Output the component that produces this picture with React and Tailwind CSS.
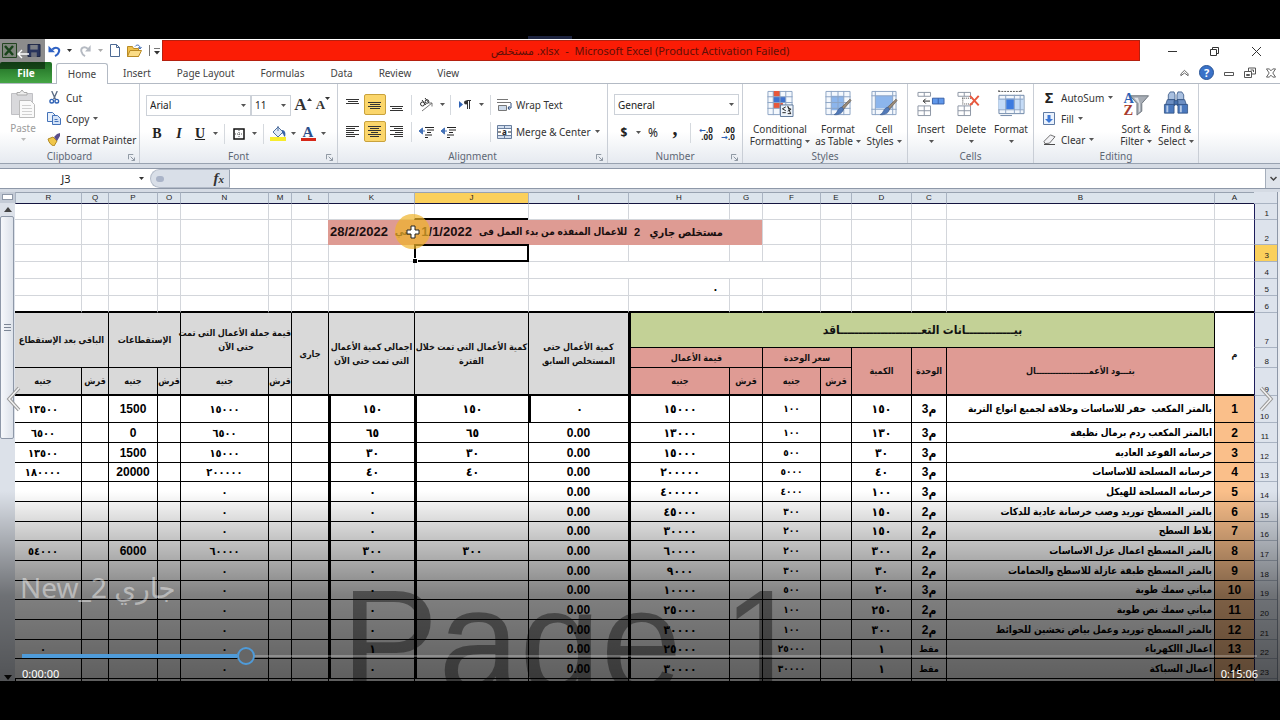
import { useState } from "react"

const ITEMS = [
  { name: "بالمتر المكعب  حفر للاساسات وخلافة لجميع انواع التربة", unit: "م3", qty: "١٥٠", price: "١٠٠", value: "١٥٠٠٠", prev: "٠", current: "١٥٠", total: "١٥٠", sum: "١٥٠٠٠", cut: "1500", rest: "١٣٥٠٠" },
  { name: "ابالمتر المكعب ردم برمال نظيفة", unit: "م3", qty: "١٣٠", price: "١٠٠", value: "١٣٠٠٠", current: "٦٥", total: "٦٥", sum: "٦٥٠٠", cut: "0", rest: "٦٥٠٠" },
  { name: "خرسانه القوعد العاديه", unit: "م3", qty: "٣٠", price: "٥٠٠", value: "١٥٠٠٠", current: "٣٠", total: "٣٠", sum: "١٥٠٠٠", cut: "1500", rest: "١٣٥٠٠" },
  { name: "خرسانه المسلحة للاساسات", unit: "م3", qty: "٤٠", price: "٥٠٠٠", value: "٢٠٠٠٠٠", current: "٤٠", total: "٤٠", sum: "٢٠٠٠٠٠", cut: "20000", rest: "١٨٠٠٠٠" },
  { name: "خرسانه المسلحة للهيكل", unit: "م3", qty: "١٠٠", price: "٤٠٠٠", value: "٤٠٠٠٠٠" },
  { name: "بالمتر المسطح توريد وصب خرسانة عادية للدكات", unit: "م2", qty: "١٥٠", price: "٣٠٠", value: "٤٥٠٠٠" },
  { name: "بلاط السطح", unit: "م2", qty: "١٥٠", price: "٢٠٠", value: "٣٠٠٠٠" },
  { name: "بالمتر المسطح اعمال عزل الاساسات", unit: "م2", qty: "٣٠٠", price: "٢٠٠", value: "٦٠٠٠٠", current: "٣٠٠", total: "٣٠٠", sum: "٦٠٠٠٠", cut: "6000", rest: "٥٤٠٠٠" },
  { name: "بالمتر المسطح طبقة عازلة للاسطح والحمامات", unit: "م2", qty: "٣٠", price: "٣٠٠", value: "٩٠٠٠" },
  { name: "مباني سمك طوبة", unit: "م3", qty: "٢٠", price: "٥٠٠", value: "١٠٠٠٠" },
  { name: "مباني سمك نص طوبة", unit: "م2", qty: "٢٥٠", price: "١٠٠", value: "٢٥٠٠٠" },
  { name: "بالمتر المسطح توريد وعمل بياض تخشين للحوائط", unit: "م2", qty: "٣٠٠", price: "١٠٠", value: "٣٠٠٠٠" },
  { name: "اعمال االكهرباء", unit: "مقط", qty: "١", price: "٢٥٠٠٠", value: "٢٥٠٠٠", total: "١", rest: "٠" },
  { name: "اعمال السباكة", unit: "مقط", qty: "١", price: "٣٠٠٠٠", value: "٣٠٠٠٠" },
]

const COLUMNS = [
  ["A", "w-[40px]"],
  ["B", ""],
  ["C", "w-[35px]"],
  ["D", "w-[60px]"],
  ["E", "w-[31px]"],
  ["F", "w-[58px]"],
  ["G", "w-[33px]"],
  ["H", "w-[101px]"],
  ["I", "w-[100px]"],
  ["J", "w-[114px]"],
  ["K", "w-[86px]"],
  ["L", "w-[37px]"],
  ["M", "w-[23px]"],
  ["N", "w-[88px]"],
  ["O", "w-[23px]"],
  ["P", "w-[49px]"],
  ["Q", "w-[27px]"],
  ["R", "w-[66px]"],
]

const TABS = ["Insert", "Page Layout", "Formulas", "Data", "Review", "View"]

function Caret({ className = "text-[#555]" }) {
  return (
    <svg viewBox="0 0 5 3" className={`w-[5px] h-[3px] shrink-0 ${className}`} fill="currentColor">
      <path d="M0 0h5L2.5 3z" />
    </svg>
  )
}

function CaretButton({ label }) {
  return (
    <button aria-label={label} className="w-[10px] h-5 flex items-center justify-center">
      <Caret />
    </button>
  )
}

function Sep({ className = "mx-[4px]" }) {
  return <span className={`w-px h-5 bg-[#d5d9de] shrink-0 ${className}`}></span>
}

function IconButton({ label, active, wide, children }) {
  return (
    <button
      aria-label={label}
      className={`h-[21px] flex items-center justify-center shrink-0 ${wide ? "w-[22px]" : "w-5"} ${active ? "bg-[#fbd66b] border border-[#c9a23c] rounded-[2px]" : ""}`}
    >
      {children}
    </button>
  )
}

function Group({ title, width, launcher, children }) {
  return (
    <section className={`h-full shrink-0 flex flex-col border-r border-[#c9ced6] ${width}`}>
      <div className="h-[64px] shrink-0">{children}</div>
      <div className="flex-1 relative flex items-center justify-center text-[#5d6775]">
        {title}
        {launcher && (
          <button aria-label={`${title} settings`} className="absolute right-[4px] top-[6px]">
            <svg viewBox="0 0 8 8" className="w-[7px] h-[7px]" fill="none" stroke="#7d8794">
              <path d="M.5 6V.5H6M3 3l4 4M7.500 4v3.500H4" />
            </svg>
          </button>
        )}
      </div>
    </section>
  )
}

function BigButton({ icon, lines, caretBelow, width }) {
  return (
    <button className={`flex flex-col items-center pt-[6px] text-[#333] ${width}`}>
      {icon}
      <span className="mt-[6px] leading-[12px]">{lines[0]}</span>
      {caretBelow ? (
        <span className="h-[12px] flex items-center"><Caret /></span>
      ) : (
        <span className="leading-[12px] flex items-center gap-[3px] whitespace-nowrap">{lines[1]} <Caret /></span>
      )}
    </button>
  )
}

function SmallButton({ icon, label, caret }) {
  return (
    <button className="h-[21px] flex items-center gap-[4px] whitespace-nowrap text-[#333]">
      <span className="w-4 flex justify-center">{icon}</span>
      {label}
      {caret && <Caret />}
    </button>
  )
}

function RibbonSelect({ label, value, width }) {
  return (
    <div className={`relative h-[21px] ${width}`}>
      <select aria-label={label} defaultValue={value} className="w-full h-full appearance-none bg-white border border-[#ccd1d8] pl-[3px] text-[#222]">
        <option>{value}</option>
      </select>
      <span className="absolute right-[5px] top-[9px]"><Caret /></span>
    </div>
  )
}

/* horizontal text lines, used by all six alignment buttons */
function Lines({ rows, y = 2 }) {
  return (
    <svg viewBox="0 0 14 14" className="w-[14px] h-[14px]" stroke="#333">
      {rows.map(([x, w], i) => (
        <path key={i} d={`M${x} ${y + i * 2 - 0.5}h${w}`} />
      ))}
    </svg>
  )
}

function SheetIcon({ kind }) {
  return (
    <svg viewBox="0 0 28 28" className="w-[28px] h-[27px]">
      <path d="M1.500 1.500h25v24h-25z" fill="#f4f8fd" stroke="#8ba3c4" />
      {kind !== "cell" && <path d="M7 6h13v15H7z" fill={kind === "table" ? "#8cb5ec" : "#f4f8fd"} />}
      {kind === "cell" && <path d="M5 6h18v13H5z" fill="#8cb5ec" />}
      {kind === "cond" && (
        <>
          <path d="M7 1h7v6H7zM7 13h10v6H7z" fill="#e8583a" />
          <path d="M7 7h13v6H7z" fill="#3f72cf" />
        </>
      )}
      <path d={kind === "cell" ? "M1 6h26M1 20h26M5 1v25M23 1v25" : "M1 7h26M1 13h26M1 19h26M7 1v25M14 1v25M20 1v25"} stroke="#8ba3c4" fill="none" />
      {kind === "cond" ? (
        <>
          <path d="M14.500 15.500h13v12h-13z" fill="#eef4fb" stroke="#5c7698" />
          <path d="M20 17.500l-3.500 2 3.500 2M16.500 23.500H20M22 18l3.500 2-3.500 2M22 24.500h3.500M22 16.500l3 8" stroke="#222" fill="none" />
        </>
      ) : (
        <>
          <path d="M26.500 9.500l1 1.500-9 10.500-2.500-2z" fill="#9a8a78" stroke="#62584e" strokeWidth=".7" />
          <path d="M19 18.500c1.500 2-.5 5.500-4 6.500-2 .8-4 .8-5 .5 2.500-1 3-3.500 4.500-5.500 1.200-1.600 3-2.300 4.500-1.500z" fill="#5179b8" stroke="#35568b" strokeWidth=".6" />
        </>
      )}
    </svg>
  )
}

function CellsIcon({ kind }) {
  if (kind === "format") {
    return (
      <svg viewBox="0 0 28 28" className="w-[28px] h-[27px]" fill="none">
        <path d="M1 1.500h24M1.500 0v3M24.500 0v3" stroke="#555" strokeDasharray="2 1" />
        <path d="M1.500 5.500h26v19h-26z" fill="#f3f7fc" stroke="#6d86a8" />
        <path d="M1 9h26v11H1z" fill="#c4dbf7" />
        <path d="M9 9h8v11H9z" fill="#3d7be0" />
        <path d="M1 9.500h26M1 20.500h26M8.500 5v19M17.500 5v19M23.500 5v19" stroke="#8ba3c4" />
        <path d="M3 26.500h12" stroke="#6d86a8" />
      </svg>
    )
  }
  return (
    <svg viewBox="0 0 28 28" className="w-[28px] h-[27px]" fill="none">
      <path d="M.5 2.500h13v4H.5zM7 2.500v4M.5 16.500h13v10H.5zM7 16.500v10M.5 21.500h13" fill="#fff" stroke="#8b95a3" />
      {kind === "insert" ? (
        <>
          <path d="M15.500 8.500h12v6h-12z" fill="#5f97ea" stroke="#3a62a8" />
          <path d="M21.500 8.500v6" stroke="#3a62a8" />
          <path d="M13 11.500H6M8.500 9L6 11.500 8.500 14" stroke="#222" />
        </>
      ) : (
        <>
          <path d="M5 8.500h12M5 14.500h12M5.500 8v6" stroke="#444" strokeDasharray="1 1" />
          <path d="M13 6l9 10M22 6l-9 10" stroke="#e8593f" strokeWidth="2" />
        </>
      )}
    </svg>
  )
}

function Binoculars() {
  return (
    <svg viewBox="0 0 28 28" className="w-[28px] h-[27px]" stroke="#2f4f80" strokeWidth=".8">
      <path d="M8 2h4l1 3v5H6V5zM16 2h4l2 3v5h-7V5z" fill="#a9c0e0" />
      <path d="M5 10h8v6H3zM15 10h8l2 6H15z" fill="#6d90c4" />
      <path d="M12 11h4v4h-4z" fill="#4670ad" />
      <path d="M2 15h10v9H2zM16 15h10v9H16z" fill="#4a78bd" />
      <path d="M4 16h2v7H4zM18 16h2v7h-2z" fill="#b6cbe8" stroke="none" />
    </svg>
  )
}

function SortIcon() {
  return (
    <svg viewBox="0 0 28 28" className="w-[28px] h-[27px]">
      <path d="M8 6h19l-7 8v8l-5 4V14z" fill="#a7adb5" stroke="#6b727c" />
      <path d="M12 8h4l2 6v8l-1 1V14z" fill="#dfe3e7" />
      <text x="1" y="13" fontFamily="Liberation Serif" fontWeight="bold" fontSize="15" fill="#2f62b5">A</text>
      <text x="1" y="26" fontFamily="Liberation Serif" fontWeight="bold" fontSize="15" fill="#a83a2c">Z</text>
    </svg>
  )
}

function TitleBar() {
  return (
    <header className="h-[23px] shrink-0 flex items-center bg-white">
      <div className="w-[162px] h-full flex items-center gap-[7px] pl-[2px]">
        <svg viewBox="0 0 15 15" className="w-[15px] h-[15px] shrink-0">
          <path d="M.5.500h14v14H.5z" fill="#e6f2e2" stroke="#3f7d3b" />
          <path d="M3 3l8 9M11 3l-8 9" stroke="#2d7a31" strokeWidth="2.500" />
        </svg>
        <svg viewBox="0 0 14 14" className="w-[14px] h-[13px] ml-[3px] shrink-0">
          <path d="M.5.500h13v13H.5z" fill="#4a5fa8" stroke="#2a3b77" />
          <path d="M3 1h8v5H3z" fill="#e4e9f5" />
          <path d="M4 9h6v5H4z" fill="#c6cde0" />
        </svg>
        <button aria-label="Undo" className="flex items-center gap-[5px]">
          <svg viewBox="0 0 14 14" className="w-[14px] h-[13px]" fill="none">
            <path d="M4 6c4-4 9-1 7 3-.5 1.500-2 3-4 4" stroke="#2f62c4" strokeWidth="2.200" />
            <path d="M0 2v7h7z" fill="#2f62c4" />
          </svg>
          <Caret className="text-[#333]" />
        </button>
        <button aria-label="Redo" className="flex items-center gap-[5px]">
          <svg viewBox="0 0 14 14" className="w-[14px] h-[13px]" fill="none">
            <path d="M9 5C5 2 1 4 2 8c.5 2 2 4 4 5" stroke="#b5bac2" strokeWidth="2" />
            <path d="M12 1v7H6z" fill="#b5bac2" />
          </svg>
          <Caret className="text-[#aaa]" />
        </button>
        <svg viewBox="0 0 10 13" className="w-[10px] h-[13px] shrink-0">
          <path d="M.5.500h6l3 3v9h-9z" fill="#fff" stroke="#4d6a94" />
          <path d="M6.500.500v3h3" fill="none" stroke="#4d6a94" />
        </svg>
        <svg viewBox="0 0 15 13" className="w-[15px] h-[13px] shrink-0">
          <path d="M.5 2.500h5l1 2h5v8H.5z" fill="#f0c24c" stroke="#b98a24" />
          <path d="M3 6.500h11.500l-3 6H.5z" fill="#fbdc86" stroke="#b98a24" />
          <path d="M8 2.500c2-2.500 5-1.500 5 1.500M11.500 3L13 5l1.500-2" fill="none" stroke="#3a67b0" />
        </svg>
        <button aria-label="Customize toolbar">
          <svg viewBox="0 0 11 11" className="w-[11px] h-[11px]">
            <path d="M.5 0v11M5 3.500h6" stroke="#777" />
            <path d="M5 6h6L8 9.500z" fill="#333" />
          </svg>
        </button>
      </div>
      <div className="flex-1 h-[21px] bg-[#fb1c05] border border-[#b5200f] flex items-center justify-center text-[11px] text-[#5f0f08]">
        <h1 className="whitespace-pre pr-[22px]">مستخلص .xlsx  -  Microsoft Excel (Product Activation Failed)</h1>
      </div>
      <div className="w-[140px] h-full flex items-center justify-end gap-[31px] pr-[18px] pt-[2px] text-[#333]">
        <button aria-label="Minimize">
          <svg viewBox="0 0 11 11" className="w-[11px] h-[11px]" stroke="currentColor"><path d="M1 5.500h9" /></svg>
        </button>
        <button aria-label="Restore">
          <svg viewBox="0 0 11 11" className="w-[11px] h-[11px]" stroke="currentColor" fill="none"><path d="M1.500 3.500h6v6h-6zM3.500 3.500v-2h6v6h-2" /></svg>
        </button>
        <button aria-label="Close">
          <svg viewBox="0 0 11 11" className="w-[11px] h-[11px]" stroke="currentColor"><path d="M1 1l9 9M10 1l-9 9" /></svg>
        </button>
      </div>
    </header>
  )
}

function TabRow() {
  return (
    <nav className="h-[22px] shrink-0 flex items-end border-b border-[#b3bac4] text-[#444]">
      <button className="w-[52px] h-[21px] font-bold text-white rounded-t-[2px] bg-linear-to-b from-[#1d6c22] to-[#45a545]">File</button>
      <button className="w-[52px] h-[21px] ml-[4px] mr-[2px] -mb-px bg-white border border-b-0 border-[#b3bac4] rounded-t-[3px]">Home</button>
      {TABS.map((t) => (
        <button key={t} className="h-[21px] px-[13px]">{t}</button>
      ))}
      <div className="ml-auto h-[21px] flex items-center gap-[10px] pr-[4px] text-[#555]">
        <svg viewBox="0 0 10 8" className="w-[9px] h-[8px]" fill="none" stroke="currentColor"><path d="M1 5l4-4 4 4v2L5 4 1 7z" /></svg>
        <button aria-label="Help" className="size-[15px] rounded-full bg-[#3a72c8] border border-[#2a5596] text-[11px] text-white font-bold leading-[12px]">?</button>
        <svg viewBox="0 0 10 8" className="w-[10px] h-[8px]" fill="none" stroke="currentColor"><path d="M.5 3.500h9v3h-9z" /></svg>
        <svg viewBox="0 0 12 11" className="w-[12px] h-[11px]" fill="none" stroke="currentColor"><path d="M.5 4.500h7v6h-7zM2.500 7.500h3v1h-3zM4.500 4v-3h7v6h-3.500M6.500 3h3v2" /></svg>
        <svg viewBox="0 0 11 10" className="w-[10px] h-[10px]" fill="none" stroke="currentColor"><path d="M.5.500h3l2 2 2-2h3L7.500 5l3 4.500h-3l-2-2-2 2h-3L3.500 5z" /></svg>
      </div>
    </nav>
  )
}

function Ribbon() {
  return (
    <div className="h-[80px] shrink-0 flex bg-linear-to-b from-white from-60% to-[#e6eaf0] border-b border-[#98a2b0]">
      <Group title="Clipboard" width="w-[140px]" launcher>
        <div className="flex">
          <button className="w-[46px] pt-[6px] flex flex-col items-center text-[#9b9b9b]">
            <svg viewBox="0 0 26 28" className="w-[26px] h-[28px]">
              <path d="M1.500 3.500h21v21h-21z" fill="#d9d9dc" stroke="#c0c0c4" />
              <path d="M7 5V2.500h3L12 0l2 2.500h3V5z" fill="#eee" stroke="#aaa" />
              <path d="M9.500 10.500h11l4 4v13h-15z" fill="#fafafa" stroke="#bbb" />
              <path d="M12 15.500h9M12 18.500h10M12 21.500h10M12 24.500h10" stroke="#d0d0d0" />
            </svg>
            <span className="mt-[4px] leading-[13px]">Paste</span>
            <Caret className="text-[#bbb] mt-[3px]" />
          </button>
          <div className="pt-[3px]">
            <SmallButton label="Cut" icon={
              <svg viewBox="0 0 12 14" className="w-[11px] h-[13px]" fill="none">
                <path d="M3 0l4 9M9 0L5 9" stroke="#5a6b85" strokeWidth="1.500" />
                <circle cx="3" cy="11" r="2" stroke="#2f62b5" strokeWidth="1.500" />
                <circle cx="8.500" cy="11" r="2" stroke="#2f62b5" strokeWidth="1.500" />
              </svg>
            } />
            <SmallButton label="Copy" caret icon={
              <svg viewBox="0 0 14 13" className="w-[14px] h-[13px]" stroke="#4472b8">
                <path d="M.5.500h5l3 3v6h-8z" fill="#e8f0fb" />
                <path d="M5.500 3.500h5l3 3v6h-8z" fill="#d4e3f8" />
                <path d="M7.500 7.500h3M7.500 9.500h4" />
              </svg>
            } />
            <SmallButton label="Format Painter" icon={
              <svg viewBox="0 0 14 13" className="w-[14px] h-[13px]">
                <path d="M1 6l5-2 4 4-3 5c-3-1-5-3-6-7z" fill="#f0c64a" stroke="#b38b25" />
                <path d="M7 4l3-3 3-1v3l-3 5z" fill="#5a4e8a" />
              </svg>
            } />
          </div>
        </div>
      </Group>

      <Group title="Font" width="w-[198px]" launcher>
        <div className="pl-[6px] pt-[10px] flex flex-col gap-[7px]">
          <div className="flex items-center">
            <RibbonSelect label="Font" value="Arial" width="w-[105px]" />
            <RibbonSelect label="Font size" value="11" width="w-[40px]" />
            <button aria-label="Grow font" className="w-[24px] flex items-start justify-center text-[#333]">
              <span className="font-['Liberation_Serif'] font-bold text-[17px] leading-5">A</span>
              <svg viewBox="0 0 5 3" className="w-[5px] h-[3px] mt-[3px]"><path d="M0 3h5L2.500 0z" fill="#333" /></svg>
            </button>
            <button aria-label="Shrink font" className="w-[16px] flex items-start justify-center text-[#333]">
              <span className="font-['Liberation_Serif'] font-bold text-[13px] leading-[22px]">A</span>
              <svg viewBox="0 0 5 3" className="w-[5px] h-[3px] mt-[3px]"><path d="M0 0h5L2.500 3z" fill="#333" /></svg>
            </button>
          </div>
          <div className="flex items-center font-['Liberation_Serif'] text-[14px] font-bold text-[#222]">
            <IconButton label="Bold" wide>B</IconButton>
            <IconButton label="Italic" wide><i>I</i></IconButton>
            <IconButton label="Underline"><u>U</u></IconButton>
            <CaretButton label="Underline style" />
            <Sep />
            <IconButton label="Borders">
              <svg viewBox="0 0 12 12" className="size-[12px]" fill="none" stroke="#111">
                <path d="M1 1h10v10H1z" strokeWidth="1.500" />
                <path d="M6 2v8M2 6h8" strokeDasharray="1 1" strokeWidth=".7" />
              </svg>
            </IconButton>
            <CaretButton label="Border style" />
            <Sep />
            <IconButton label="Fill color">
              <svg viewBox="0 0 16 15" className="w-[16px] h-[15px]">
                <path d="M0 11h16v4H0z" fill="#f7ec2c" />
                <path d="M3 6l5-5 5 5-5 5z" fill="#dfe9f7" stroke="#51719f" />
                <path d="M12 4c3 0 4 3 3 7-2-1-1-3-3-4z" fill="#3a64a8" />
                <path d="M8 0v5" stroke="#51719f" />
              </svg>
            </IconButton>
            <CaretButton label="Fill color menu" />
            <IconButton label="Font color">
              <span className="w-[15px] border-b-[3px] border-[#d62718] text-[#2c4f8c] text-[15px] leading-[12px]">A</span>
            </IconButton>
            <CaretButton label="Font color menu" />
          </div>
        </div>
      </Group>

      <Group title="Alignment" width="w-[270px]" launcher>
        <div className="pl-[4px] pt-[10px] flex flex-col gap-[6px]">
          <div className="flex items-center">
            <IconButton label="Top align" wide><Lines rows={[[0, 13], [2, 10], [0, 13]]} /></IconButton>
            <IconButton label="Middle align" wide active><Lines rows={[[0, 13], [2, 10], [0, 13], [2, 10]]} y={5} /></IconButton>
            <IconButton label="Bottom align" wide><Lines rows={[[0, 13], [2, 10], [0, 13]]} y={9} /></IconButton>
            <Sep className="mx-[3px]" />
            <IconButton label="Orientation" wide>
              <svg viewBox="0 0 15 14" className="w-[15px] h-[14px]" fill="none" stroke="#333">
                <circle cx="3.500" cy="6" r="2" />
                <path d="M3 2l4 5M6 0l4 5" />
                <circle cx="8" cy="3.500" r="1.800" />
                <path d="M3 13L13 5M13 8.500V5H9.500" stroke="#777" />
              </svg>
            </IconButton>
            <CaretButton label="Orientation menu" />
            <Sep className="mx-[3px]" />
            <IconButton label="Text direction" wide>
              <svg viewBox="0 0 12 10" className="w-[12px] h-[10px]">
                <path d="M0 1l4 3.500L0 8z" fill="#2f62b5" />
                <path d="M8.500 9V.5M10.500 9V.5M12 .5H7.500" stroke="#333" fill="none" />
                <circle cx="7" cy="2.500" r="2" fill="#333" />
              </svg>
            </IconButton>
            <CaretButton label="Text direction menu" />
            <Sep className="ml-[4px] mr-[5px]" />
            <SmallButton label="Wrap Text" icon={
              <svg viewBox="0 0 15 14" className="w-[15px] h-[14px]" fill="none">
                <path d="M0 1.500h11M0 4.500h14" stroke="#777" />
                <path d="M1.500 7.500h8v5h-8z" fill="#cfdcec" stroke="#777" />
                <path d="M14 5v5h-3M12.500 8L11 10l1.500 2" stroke="#2f4f80" />
              </svg>
            } />
          </div>
          <div className="flex items-center">
            <IconButton label="Align left" wide><Lines rows={[[0, 13], [0, 9], [0, 13], [0, 8], [0, 13], [0, 9]]} /></IconButton>
            <IconButton label="Center" wide active><Lines rows={[[0, 13], [2, 9], [0, 13], [3, 7], [0, 13], [2, 9]]} /></IconButton>
            <IconButton label="Align right" wide><Lines rows={[[0, 13], [4, 9], [0, 13], [5, 8], [0, 13], [4, 9]]} /></IconButton>
            <Sep className="mx-[3px]" />
            {["Decrease indent", "Increase indent"].map((l) => (
              <IconButton key={l} label={l} wide>
                <svg viewBox="0 0 15 14" className="w-[15px] h-[14px]" fill="none">
                  <path d="M6 2.500h9M8 5h7M8 7.500h4M6 10h7M6 12.500h3" stroke="#222" strokeWidth="1.200" />
                  <path d="M6 6H2M3.500 3L0 6l3.500 3z" fill="#4472b8" stroke="#4472b8" />
                </svg>
              </IconButton>
            ))}
            <Sep className="ml-[31px] mr-[5px]" />
            <SmallButton label="Merge & Center" caret icon={
              <svg viewBox="0 0 15 14" className="w-[15px] h-[14px]" fill="none">
                <path d="M.5.500h14v13H.5z" fill="#d3dfef" stroke="#6a7f9e" />
                <path d="M0 3.500h15M0 10.500h15M7.500 0v3.500M7.500 10.500v3" stroke="#6a7f9e" />
                <path d="M1 4h13v6H1z" fill="#fff" />
                <path d="M1 7h3M11 7h3" stroke="#222" />
                <text x="5" y="9.500" fontSize="8" fontWeight="bold" fill="#222">a</text>
              </svg>
            } />
          </div>
        </div>
      </Group>

      <Group title="Number" width="w-[135px]" launcher>
        <div className="pl-[6px] pr-[3px] pt-[10px] flex flex-col gap-[7px]">
          <RibbonSelect label="Number format" value="General" width="w-full" />
          <div className="flex items-center text-[#222]">
            <IconButton label="Currency"><b className="text-[12px]">$</b></IconButton>
            <CaretButton label="Currency menu" />
            <IconButton label="Percent" wide><span className="text-[12px]">%</span></IconButton>
            <IconButton label="Comma" wide><b className="font-['Liberation_Serif'] text-[20px] leading-[8px] pb-[10px]">,</b></IconButton>
            <Sep />
            <IconButton label="Increase decimal" wide>
              <span className="text-[8px] font-bold leading-[7px] text-right"><span className="text-[#2f62b5]">←</span>.0<br />.00</span>
            </IconButton>
            <IconButton label="Decrease decimal" wide>
              <span className="text-[8px] font-bold leading-[7px] text-right">.00<br /><span className="text-[#2f62b5]">→</span>.0</span>
            </IconButton>
          </div>
        </div>
      </Group>

      <Group title="Styles" width="w-[165px]">
        <div className="flex pl-[4px]">
          <BigButton width="w-[66px]" lines={["Conditional", "Formatting"]} icon={<SheetIcon kind="cond" />} />
          <BigButton width="w-[50px]" lines={["Format", "as Table"]} icon={<SheetIcon kind="table" />} />
          <BigButton width="w-[42px]" lines={["Cell", "Styles"]} icon={<SheetIcon kind="cell" />} />
        </div>
      </Group>

      <Group title="Cells" width="w-[126px]">
        <div className="flex pl-[3px]">
          <BigButton width="w-[40px]" lines={["Insert"]} caretBelow icon={<CellsIcon kind="insert" />} />
          <BigButton width="w-[40px]" lines={["Delete"]} caretBelow icon={<CellsIcon kind="delete" />} />
          <BigButton width="w-[40px]" lines={["Format"]} caretBelow icon={<CellsIcon kind="format" />} />
        </div>
      </Group>

      <Group title="Editing" width="w-[165px]">
        <div className="flex pl-[7px]">
          <div className="w-[75px] pt-[3px]">
            <SmallButton label="AutoSum" caret icon={<b className="text-[14px] text-[#222]">Σ</b>} />
            <SmallButton label="Fill" caret icon={
              <svg viewBox="0 0 12 13" className="w-[12px] h-[13px]">
                <path d="M.5.500h11v12H.5z" fill="#eaf2fd" stroke="#5f7ba4" />
                <path d="M4.500 3h3v4H10l-4 4-4-4h2.500z" fill="#3d78d6" />
              </svg>
            } />
            <SmallButton label="Clear" caret icon={
              <svg viewBox="0 0 14 12" className="w-[13px] h-[11px]">
                <path d="M1 8l7-7 5 2-6 7-5 .5z" fill="#f3f3f6" stroke="#666" />
                <path d="M1 11.500h12" stroke="#333" />
              </svg>
            } />
          </div>
          <BigButton width="w-[40px]" lines={["Sort &", "Filter"]} icon={<SortIcon />} />
          <BigButton width="w-[40px]" lines={["Find &", "Select"]} icon={<Binoculars />} />
        </div>
      </Group>
    </div>
  )
}

function FormulaBar() {
  return (
    <div className="h-[28px] shrink-0 bg-[#d5dbe4] pt-[4px] pb-[3px]">
      <div className="h-[21px] flex bg-white border-y border-[#8e98a8]">
        <div className="w-[150px] relative">
          <input aria-label="Name box" defaultValue="J3" className="w-full h-full pr-[18px] text-center text-[11px] text-[#222]" />
          <span className="absolute right-[6px] top-[8px]"><Caret className="text-[#333]" /></span>
        </div>
        <div className="w-[80px] rounded-l-full border border-r-[#9aa4b3] border-[#b4bcc9] bg-[#d9dfe8] flex items-center justify-between pl-[5px] pr-[5px]">
          <span className="w-[8px] h-[6px] rounded-full bg-[#aab4c8]"></span>
          <i className="font-['Liberation_Serif'] font-bold text-[15px] leading-4 text-[#333]">f<span className="text-[11px]">x</span></i>
        </div>
        <input aria-label="Formula" className="flex-1 min-w-0 h-full" />
        <button aria-label="Expand formula bar" className="w-[15px] bg-[#dfe4eb] border-l border-[#a5aebb] flex items-center justify-center">
          <svg viewBox="0 0 7 6" className="w-[7px] h-[6px]" fill="none" stroke="#444" strokeWidth="1.500"><path d="M.5 1l3 3 3-3" /></svg>
        </button>
      </div>
    </div>
  )
}

function RowHead({ n, height, active }) {
  return (
    <th className={`${height} font-normal text-[8px] leading-[10px] align-bottom text-right pr-[8px] text-[#222] border-b border-[#a9b3c2] border-l border-l-[#1d1d5c] ${active ? "bg-[#fbd05b]" : "bg-[#dde3ec]"}`}>
      {n}
    </th>
  )
}

const GRID = "border-l border-b border-[#d3d6db]"
const HEAD = "border-l border-b border-black font-bold text-[9px] leading-[14px] text-center align-middle whitespace-nowrap text-[#111]"
const CELL = "border-l border-b border-black font-bold text-center align-middle leading-4 whitespace-pre overflow-hidden"

/* empty grid cells between two column letters */
function Blank({ from, to, last }) {
  return COLUMNS.filter(([c]) => c >= from && c <= to).map(([c]) => (
    <td key={c} className={`${GRID} ${c === "R" ? "border-l-0" : ""} ${last ? "border-b-2 border-b-black" : ""}`}></td>
  ))
}

function Sheet() {
  return (
    <table dir="rtl" className="w-full table-fixed border-separate border-spacing-0 bg-white font-['Liberation_Sans','DejaVu_Sans_Condensed','DejaVu_Sans',sans-serif]">
      <colgroup>
        <col className="w-[23px]" />
        {COLUMNS.map(([c, w]) => <col key={c} className={w} />)}
      </colgroup>
      <thead>
        <tr className="h-[12px]">
          <th className="bg-[#dde3ec] border-b border-[#a9b3c2]"></th>
          {COLUMNS.map(([c]) => (
            <th key={c} className={`h-[12px] p-0 font-normal text-[8px] leading-[10px] text-[#222] border-b border-b-[#14143f] border-l border-l-[#a9b3c2] border-t border-t-[#98a2b0] ${c === "J" ? "bg-[#fbd05b]" : "bg-[#dce4ec]"}`}>{c}</th>
          ))}
        </tr>
      </thead>
      <tbody>
        <tr>
          <RowHead n={1} height="h-[16px]" />
          <Blank from="A" to="I" />
          <td className={`${GRID} border-b-2 border-b-black`}></td>
          <Blank from="K" to="R" />
        </tr>
        <tr>
          <RowHead n={2} height="h-[25px]" />
          <Blank from="A" to="F" />
          <td colSpan={5} className="bg-[#de9b93] border-b border-[#de9b93] py-0 pr-[39px] pl-[2px]">
            <div className="flex justify-between text-[13px] font-bold leading-5 whitespace-pre text-[#1a0f0f]">
              <span className="text-[11px]">مستخلص جاري   2</span>
              <span className="text-[10px]">للاعمال المنفذه من بدء العمل فى</span>
              <span>1/1/2022</span>
              <span className="text-[10px]">حتي</span>
              <span>28/2/2022</span>
            </div>
          </td>
          <Blank from="L" to="R" />
        </tr>
        <tr>
          <RowHead n={3} height="h-[17px]" active />
          <Blank from="A" to="I" />
          <td className={`${GRID} relative`}>
            <span className="absolute -inset-px border-2 border-black"></span>
            <span className="absolute -left-[2px] -bottom-[2px] size-[5px] bg-black border-t border-r border-white"></span>
          </td>
          <Blank from="K" to="R" />
        </tr>
        <tr>
          <RowHead n={4} height="h-[17px]" />
          <Blank from="A" to="E" />
          <td colSpan={4} className={GRID}></td>
          <Blank from="J" to="R" />
        </tr>
        <tr>
          <RowHead n={5} height="h-[17px]" />
          <Blank from="A" to="G" />
          <td className={`${GRID} p-0 pr-[12px] text-[12px] font-bold leading-4`}>.</td>
          <Blank from="I" to="R" />
        </tr>
        <tr>
          <RowHead n={6} height="h-[17px]" />
          <Blank from="A" to="R" last />
        </tr>
        <tr>
          <RowHead n={7} height="h-[35px]" />
          <th rowSpan={3} className={`${HEAD} border-b-2 bg-white`}>م</th>
          <th colSpan={7} className={`${HEAD} border-l-3 bg-[#c3d196] text-[12px]`}>بيـــــــــــــانات التعــــــــــــــــــــــاقد</th>
          <th rowSpan={3} className={`${HEAD} border-b-2 bg-[#d9d9d9]`}>كمية الأعمال حتى<br />المستخلص السابق</th>
          <th rowSpan={3} className={`${HEAD} border-b-2 bg-[#d9d9d9]`}>كمية الأعمال التى تمت خلال<br />الفترة</th>
          <th rowSpan={3} className={`${HEAD} border-b-2 bg-[#d9d9d9]`}>اجمالى كمية الأعمال<br />التى تمت حتى الآن</th>
          <th rowSpan={3} className={`${HEAD} border-b-2 bg-[#d9d9d9]`}>جارى</th>
          <th rowSpan={2} colSpan={2} className={`${HEAD} bg-[#d9d9d9]`}>قيمة جملة الأعمال التى تمت<br />حتى الآن</th>
          <th rowSpan={2} colSpan={2} className={`${HEAD} bg-[#d9d9d9]`}>الإستقطاعات</th>
          <th rowSpan={2} colSpan={2} className={`${HEAD} bg-[#d9d9d9] border-l-0`}>الباقى بعد الإستقطاع</th>
        </tr>
        <tr>
          <RowHead n={8} height="h-[20px]" />
          <th rowSpan={2} className={`${HEAD} border-b-2 bg-[#df9b94]`}>بنـــود الأعمـــــــــــــــــــال</th>
          <th rowSpan={2} className={`${HEAD} border-b-2 bg-[#df9b94]`}>الوحدة</th>
          <th rowSpan={2} className={`${HEAD} border-b-2 bg-[#df9b94]`}>الكمية</th>
          <th colSpan={2} className={`${HEAD} bg-[#df9b94]`}>سعر الوحدة</th>
          <th colSpan={2} className={`${HEAD} border-l-3 bg-[#df9b94]`}>قيمة الأعمال</th>
        </tr>
        <tr>
          <RowHead n={9} height="h-[28px]" />
          {["قرش", "جنيه", "قرش", "جنيه"].map((t, i) => (
            <th key={i} className={`${HEAD} border-b-2 bg-[#df9b94] ${i === 3 ? "border-l-3" : ""}`}>{t}</th>
          ))}
          {["قرش", "جنيه", "قرش", "جنيه", "قرش", "جنيه"].map((t, i) => (
            <th key={i} className={`${HEAD} border-b-2 bg-[#d9d9d9] ${i === 5 ? "border-l-0 pr-[10px]" : ""}`}>{t}</th>
          ))}
        </tr>
        {ITEMS.map((item, i) => {
          const height = i === 0 ? "h-[27px]" : i % 3 === 0 ? "h-[19px]" : "h-5"
          return (
            <tr key={i}>
              <RowHead n={i + 10} height={height} />
              <td className={`${CELL} bg-[#fabf8a] text-[12px]`}>{i + 1}</td>
              <td className={`${CELL} text-right pr-[2px] text-[10px]`}>{item.name}</td>
              <td className={`${CELL} ${item.unit === "مقط" ? "text-[9px]" : "text-[12px]"}`}>{item.unit}</td>
              <td className={`${CELL} text-[12px]`}>{item.qty}</td>
              <td className={CELL}></td>
              <td className={`${CELL} text-[10px]`}>{item.price}</td>
              <td className={CELL}></td>
              <td className={`${CELL} border-l-3 text-[12px]`}>{item.value}</td>
              <td className={`${CELL} text-[12px] ${i === 0 ? "border-l-3" : ""}`}>{item.prev || "0.00"}</td>
              <td className={`${CELL} border-l-3 text-[12px]`}>{item.current}</td>
              <td className={`${CELL} border-l-3 text-[12px]`}>{item.total || "٠"}</td>
              <td className={CELL}></td>
              <td className={CELL}></td>
              <td className={`${CELL} text-[11px]`}>{item.sum || "٠"}</td>
              <td className={CELL}></td>
              <td className={`${CELL} text-[12px]`}>{item.cut}</td>
              <td className={CELL}></td>
              <td className={`${CELL} border-l-0 pr-[10px] text-[11px]`}>{item.rest}</td>
            </tr>
          )
        })}
        <tr>
          <RowHead height="h-5" />
          <td className={`${CELL} bg-[#fabf8a]`}></td>
          {COLUMNS.slice(1).map(([c]) => <td key={c} className={CELL}></td>)}
        </tr>
      </tbody>
    </table>
  )
}

function ScrollBar() {
  return (
    <div className="w-[15px] shrink-0 flex flex-col bg-[#dce1e9]">
      <div className="h-[11px] p-[2px] bg-[#c4cbd6]"><div className="h-[6px] bg-white border border-[#8e98a8]"></div></div>
      <button aria-label="Scroll up" className="h-[13px] flex items-center justify-center">
        <svg viewBox="0 0 8 5" className="w-[8px] h-[5px]"><path d="M0 5h8L4 0z" fill="#444" /></svg>
      </button>
      <div className="h-[223px] w-[14px] bg-linear-to-r from-[#f6f8fb] to-[#dde2ea] border border-[#8e98a8] rounded-[2px] flex flex-col items-center justify-center gap-[2px]">
        <span className="w-[7px] h-px bg-[#7c8695]"></span>
        <span className="w-[7px] h-px bg-[#7c8695]"></span>
        <span className="w-[7px] h-px bg-[#7c8695]"></span>
      </div>
      <button aria-label="Scroll down" className="mt-auto h-[8px] flex items-center justify-center">
        <svg viewBox="0 0 8 5" className="w-[8px] h-[5px]"><path d="M0 0h8L4 5z" fill="#111" /></svg>
      </button>
    </div>
  )
}

function Chevron({ flip }) {
  return (
    <svg viewBox="0 0 16 26" className={`w-[16px] h-[26px] ${flip ? "-scale-x-100" : ""}`} fill="none">
      <path d="M13 2L3 13l10 11" stroke="#9a9a9a" strokeWidth="3.500" />
      <path d="M13 2L3 13l10 11" stroke="#f2f2f2" strokeWidth="1.500" />
    </svg>
  )
}

function Player() {
  const [position, setPosition] = useState(177)
  return (
    <div className="absolute inset-x-0 bottom-0 h-[190px] flex flex-col justify-end bg-linear-to-b from-black/0 from-0% via-black/50 via-55% to-black/63 text-white">
      <p dir="ltr" className="px-[20px] text-[28px] leading-[36px] text-white/45">New_2 جاري</p>
      <div className="relative h-[20px] mt-[41px] ml-[22px] mr-[23px] flex items-center">
        <div className="w-full h-[2px] bg-white/25"></div>
        <div className="absolute left-0 h-[4px] bg-[#4f9bd9]" style={{ width: `${position / 10 - 0.3}%` }}></div>
        <input
          type="range"
          aria-label="Seek"
          min="0"
          max="1000"
          value={position}
          onChange={(e) => setPosition(Number(e.target.value))}
          className="absolute inset-0 w-full appearance-none bg-transparent [&::-webkit-slider-thumb]:appearance-none [&::-webkit-slider-thumb]:size-[18px] [&::-webkit-slider-thumb]:rounded-full [&::-webkit-slider-thumb]:border-2 [&::-webkit-slider-thumb]:border-[#4f9bd9] [&::-webkit-slider-thumb]:bg-[#666]"
        />
      </div>
      <div className="flex justify-between px-[22px] text-[11px] leading-[15px]">
        <span>0:00:00</span>
        <span>0:15:06</span>
      </div>
    </div>
  )
}

export default function App() {
  return (
    <div className="h-screen flex flex-col bg-black font-['Noto_Sans','DejaVu_Sans',sans-serif] text-[10px] leading-4">
      <div className="h-[39px] shrink-0 flex items-end justify-center">
        <span className="w-[44px] h-[3px] mr-[180px] bg-[#1d2440]"></span>
      </div>
      <main className="flex-1 min-h-0 relative flex flex-col overflow-hidden bg-white">
        <TitleBar />
        <TabRow />
        <Ribbon />
        <FormulaBar />
        <div className="flex-1 min-h-0 flex">
          <ScrollBar />
          <div className="flex-1 min-w-0 relative overflow-hidden">
            <Sheet />
            <div className="absolute left-[326px] top-[366px] text-[146px] leading-[168px] font-['Liberation_Sans'] text-black/40 whitespace-nowrap">Page 1</div>
          </div>
          <div className="w-[3px] shrink-0 bg-[#e8ebf0] border-l border-[#8e98a8]"></div>
        </div>

        {/* mouse pointer with its highlight */}
        <div className="absolute left-[395px] top-[175px] size-[35px] rounded-full bg-[#f0b429]/70 flex items-center justify-center">
          <svg viewBox="0 0 14 14" className="size-[14px]"><path d="M5 1h4v4h4v4H9v4H5V9H1V5h4z" fill="#fff" stroke="#222" /></svg>
        </div>

        <Player />
        <button aria-label="Previous" className="absolute left-[6px] top-[347px]"><Chevron /></button>
        <button aria-label="Next" className="absolute right-[6px] top-[347px]"><Chevron flip /></button>
        <button aria-label="Back" className="absolute left-0 top-0 w-[45px] h-[30px] bg-black/45 flex items-center justify-center">
          <svg viewBox="0 0 12 10" className="w-[12px] h-[10px]" fill="none" stroke="#fff" strokeWidth="1.400"><path d="M12 5H1M5 1L1 5l4 4" /></svg>
        </button>
      </main>
      <div className="h-[39px] shrink-0"></div>
    </div>
  )
}
